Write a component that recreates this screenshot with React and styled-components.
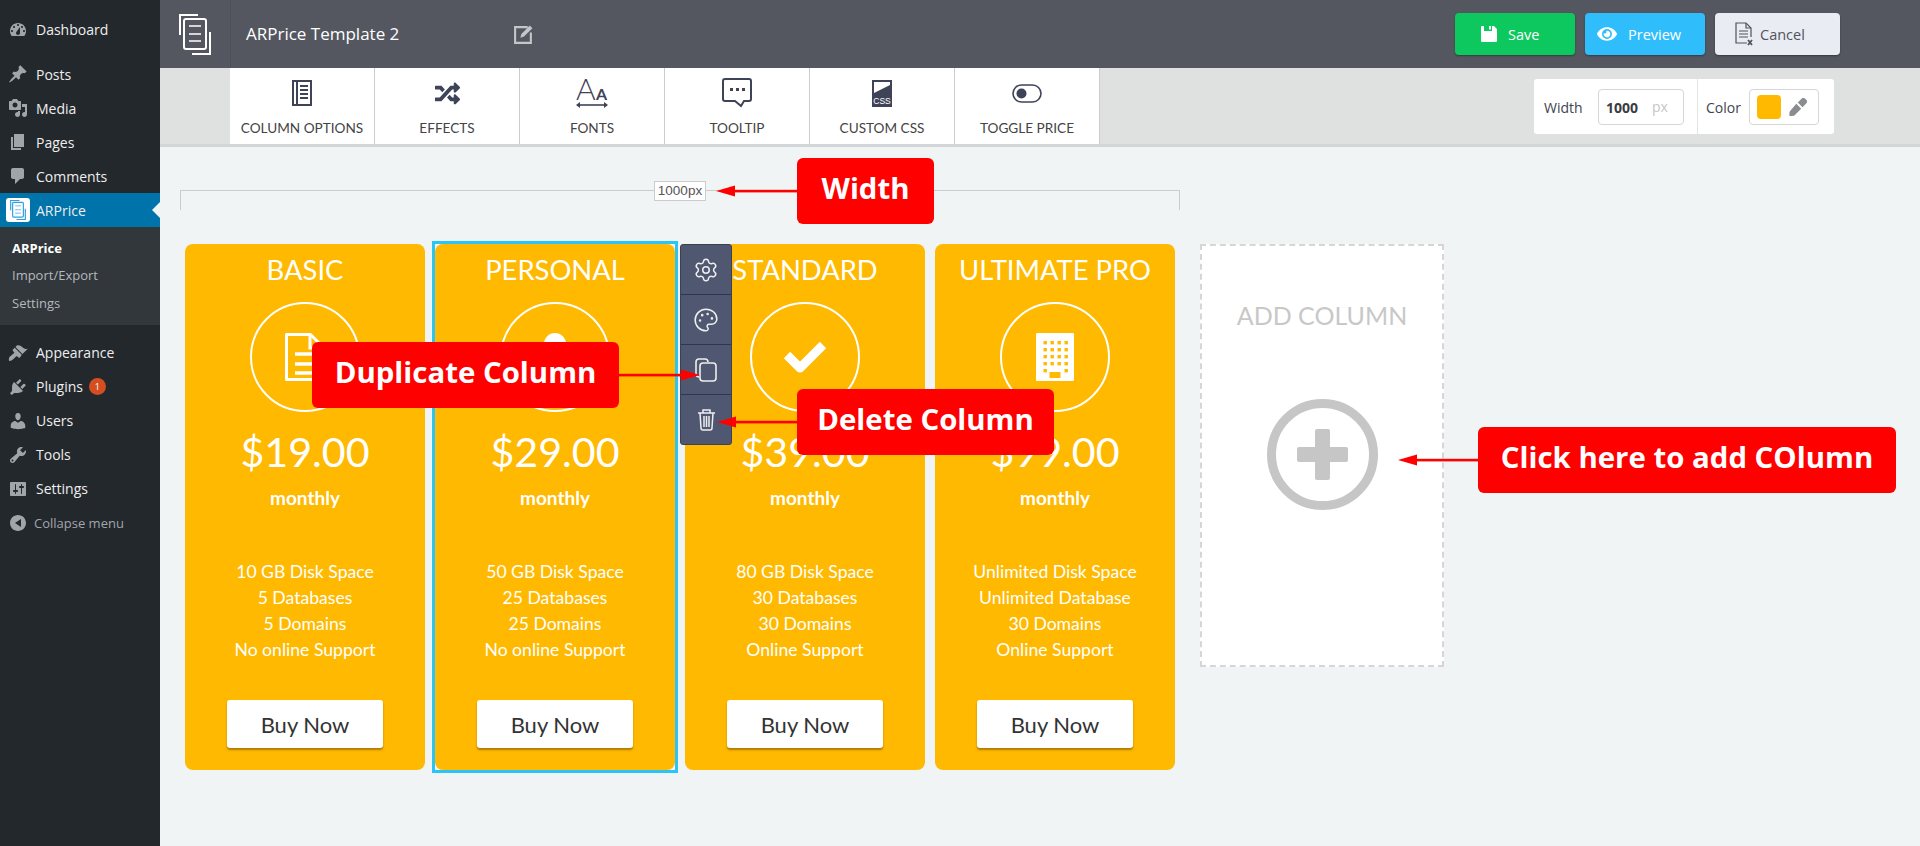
import styled, { createGlobalStyle } from "styled-components";
import { Settings as Gear, Palette } from "lucide-react";
import { FaEye, FaRandom } from "react-icons/fa";

const GlobalStyle = createGlobalStyle`
  html, body {
    margin: 0;
    padding: 0;
    height: 100%;
    overflow: hidden;
    background: #f1f4f5;
    font-family: "Open Sans", sans-serif;
  }
`;

const Page = styled.div`
  display: flex;
  width: 1920px;
  height: 846px;
  overflow: hidden;
`;

/* wp admin menu */
const Sidebar = styled.nav`
  width: 160px;
  flex-shrink: 0;
  padding-top: 13px;
  box-sizing: border-box;
  background: #23282d;
`;

const MenuItem = styled.div`
  position: relative;
  display: flex;
  align-items: center;
  height: 34px;
  margin-top: ${(p) => p.$gap || 0}px;
  padding: 0 0 ${(p) => (p.$lift ? 1 : 0)}px 8px;
  box-sizing: border-box;
  color: ${(p) => (p.$muted ? "#a0a5aa" : "#eeeeee")};
  background: ${(p) => (p.$active ? "#0073aa" : "transparent")};
  font-size: ${(p) => (p.$muted ? 13 : 14)}px;

  svg {
    flex-shrink: 0;
    width: 20px;
    height: 20px;
    margin-right: ${(p) => (p.$muted ? 6 : 8)}px;
    fill: #a0a5aa;
    fill-rule: evenodd;
  }
`;

const MenuLogo = styled.span`
  display: flex;
  align-items: center;
  justify-content: center;
  width: 24px;
  height: 24px;
  margin: 0 6px 0 -2px;
  border-radius: 3px;
  background: #ffffff;

  svg {
    width: 16px;
    height: 20px;
    margin: 0;
    fill: none;
  }
`;

const ActiveNotch = styled.span`
  position: absolute;
  right: 0;
  top: 9px;
  border: 8px solid transparent;
  border-left-width: 0;
  border-right-color: #f1f4f5;
`;

const Badge = styled.span`
  display: flex;
  align-items: center;
  justify-content: center;
  width: 17px;
  height: 17px;
  margin-left: 6px;
  border-radius: 50%;
  background: #d54e21;
  color: #ffffff;
  font-size: 9px;
`;

const SubMenu = styled.div`
  display: flex;
  flex-direction: column;
  height: 98px;
  margin-bottom: 11px;
  padding-top: 6px;
  box-sizing: border-box;
  background: #32373c;
`;

const SubItem = styled.div`
  height: 28px;
  padding-left: 12px;
  line-height: ${(p) => (p.$current ? 30 : 28)}px;
  font-size: 13px;
  font-weight: ${(p) => (p.$current ? 700 : 400)};
  color: ${(p) => (p.$current ? "#ffffff" : "#b4b9be")};
`;

const Main = styled.div`
  display: flex;
  flex: 1;
  flex-direction: column;
  min-width: 0;
`;

/* top bar */
const Header = styled.header`
  display: flex;
  align-items: center;
  height: 68px;
  flex-shrink: 0;
  background: #545760;
`;

const HeaderLogo = styled.div`
  display: flex;
  align-items: center;
  justify-content: center;
  width: 71px;
  height: 100%;
  border-right: 1px solid #4c505b;
  box-sizing: border-box;
`;

const Title = styled.div`
  width: 268px;
  margin: -1px 0 0 15px;
  color: #ffffff;
  font-size: 17px;
`;

const EditIcon = styled.svg`
  width: 21px;
  height: 21px;
  margin-left: -1px;
`;

const HeaderActions = styled.div`
  display: flex;
  gap: 10px;
  margin-left: auto;
  margin-right: 80px;
`;

const ActionButton = styled.div`
  display: flex;
  align-items: center;
  gap: ${(p) => p.$gap}px;
  width: ${(p) => p.$w}px;
  height: 42px;
  padding-left: ${(p) => p.$pad}px;
  box-sizing: border-box;
  border-radius: 4px;
  background: ${(p) => p.$bg};
  color: ${(p) => p.$color};
  font-size: 14.5px;
  box-shadow: 0 1px 2px rgba(0, 0, 0, 0.35);
`;

/* option tabs */
const Toolbar = styled.div`
  display: flex;
  height: 79px;
  flex-shrink: 0;
  padding-left: 70px;
  box-sizing: border-box;
  background: #dfe1e0;
  border-bottom: 3px solid #d2d6d8;
`;

const Tab = styled.div`
  display: flex;
  flex-direction: column;
  align-items: center;
  width: 145px;
  padding-top: 10px;
  box-sizing: border-box;
  border-right: 1px solid #cccccc;
  background: #ffffff;
  color: #444444;
  font-family: Lato, sans-serif;
  font-size: 13.6px;
`;

const TabIcon = styled.div`
  display: flex;
  align-items: center;
  justify-content: center;
  height: 30px;
  margin-bottom: 12px;
  color: #3f4358;
`;

const SizePanel = styled.div`
  display: flex;
  align-items: center;
  width: 300px;
  height: 55px;
  margin: 11px 86px 0 auto;
  border-radius: 3px;
  background: #ffffff;
  font-size: 14px;
  color: #41444f;
`;

const PanelPart = styled.div`
  display: flex;
  align-items: center;
  height: 100%;
  width: ${(p) => p.$w}px;
  padding-left: ${(p) => p.$pad}px;
  box-sizing: border-box;
  border-right: ${(p) => (p.$line ? "1px solid #e2e4e6" : "none")};
`;

const FieldLabel = styled.span`
  width: ${(p) => p.$w}px;
  padding-top: 2px;
`;

const InputBox = styled.div`
  display: flex;
  align-items: center;
  gap: ${(p) => p.$gap}px;
  width: ${(p) => p.$w}px;
  height: 36px;
  padding-left: ${(p) => p.$pad}px;
  box-sizing: border-box;
  border: 1px solid #d4d6d8;
  border-radius: 4px;
`;

const WidthValue = styled.b`
  padding-top: 2px;
  color: #3a3c42;
`;

const Unit = styled.span`
  margin-left: 14px;
  color: #c4c6ca;
`;

const Swatch = styled.span`
  width: 24px;
  height: 24px;
  border-radius: 4px;
  background: #ffb900;
`;

/* editing area */
const Canvas = styled.div`
  position: relative;
  flex: 1;
  padding-top: 43px;
  background: #f1f4f5;
`;

const Ruler = styled.div`
  position: relative;
  width: 1000px;
  height: 20px;
  margin-left: 20px;
  box-sizing: border-box;
  border: 1px solid #cccccc;
  border-bottom: 0;
`;

const RulerLabel = styled.span`
  position: absolute;
  left: 473px;
  top: -10px;
  width: 52px;
  height: 20px;
  box-sizing: border-box;
  border: 1px solid #cccccc;
  background: #ffffff;
  color: #555555;
  font-family: "Liberation Sans", sans-serif;
  font-size: 13.5px;
  line-height: 18px;
  text-align: center;
`;

const Columns = styled.div`
  display: flex;
  align-items: flex-start;
  gap: 10px;
  margin: 34px 0 0 25px;
`;

const Card = styled.div`
  position: relative;
  display: flex;
  flex-direction: column;
  align-items: center;
  width: 240px;
  height: 526px;
  border-radius: 8px;
  background: #ffb900;
  color: #ffffff;
  font-family: Lato, sans-serif;

  ${(p) =>
    p.$selected &&
    `
    &::after {
      content: "";
      position: absolute;
      inset: -3px;
      border: 3px solid #29c5f6;
      pointer-events: none;
    }
  `}
`;

const CardTitle = styled.div`
  height: 52px;
  line-height: 52px;
  font-size: 27.4px;
`;

const IconRing = styled.div`
  display: flex;
  align-items: center;
  justify-content: center;
  width: 110px;
  height: 110px;
  margin-top: 6px;
  box-sizing: border-box;
  border: 2px solid #ffffff;
  border-radius: 50%;
`;

const Price = styled.div`
  height: 50px;
  margin-top: 14px;
  line-height: 50px;
  font-size: 41.2px;
`;

const Period = styled.div`
  height: 24px;
  margin-top: 10px;
  line-height: 24px;
  font-size: 19px;
  font-weight: 700;
`;

const Features = styled.div`
  margin-top: 49px;
  text-align: center;
  font-size: 17.6px;
  line-height: 26px;
`;

const BuyButton = styled.div`
  width: 156px;
  height: 48px;
  margin-top: 37px;
  padding-top: 1px;
  box-sizing: border-box;
  border-radius: 3px;
  background: #ffffff;
  box-shadow: 0 2px 2px rgba(120, 80, 0, 0.6);
  color: #333333;
  font-size: 22px;
  line-height: 47px;
  text-align: center;
`;

const SideTools = styled.div`
  position: absolute;
  left: calc(100% + 5px);
  top: 0;
  z-index: 2;
  width: 52px;
  box-sizing: border-box;
  border: 1px solid #3a4157;
  border-radius: 3px;
  background: #4f5870;
`;

const SideTool = styled.div`
  display: flex;
  align-items: center;
  justify-content: center;
  height: 50px;
  box-sizing: border-box;
  color: #eeeeee;

  &:first-child {
    height: 49px;
  }

  & + & {
    border-top: 1px solid #2f3650;
  }
`;

const AddColumn = styled.div`
  display: flex;
  flex-direction: column;
  align-items: center;
  width: 244px;
  height: 423px;
  margin-left: 15px;
  box-sizing: border-box;
  border: 2px dashed #d6d6d6;
  background: #ffffff;
`;

const AddTitle = styled.div`
  margin-top: 53px;
  color: #c8c8c8;
  font-family: Lato, sans-serif;
  font-size: 25px;
  line-height: 32px;
`;

const AddRing = styled.div`
  position: relative;
  width: 111px;
  height: 111px;
  margin-top: 68px;
  box-sizing: border-box;
  border: 9px solid #c6c6c6;
  border-radius: 50%;

  &::before,
  &::after {
    content: "";
    position: absolute;
    background: #c6c6c6;
    border-radius: 2px;
  }

  &::before {
    left: 21px;
    top: 39px;
    width: 51px;
    height: 15px;
  }

  &::after {
    left: 39px;
    top: 21px;
    width: 15px;
    height: 51px;
  }
`;

/* red notes drawn over the screen */
const Callout = styled.div`
  position: absolute;
  left: ${(p) => p.$x - 160}px;
  top: ${(p) => p.$y - 147}px;
  z-index: 3;
  display: flex;
  align-items: center;
  justify-content: center;
  width: ${(p) => p.$w}px;
  height: 66px;
  padding-bottom: 6px;
  box-sizing: border-box;
  border-radius: 6px;
  background: #ff0000;
  color: #ffffff;
  font-size: 29.4px;
  font-weight: 700;
  white-space: nowrap;
`;

const ArrowSvg = styled.svg`
  position: absolute;
  left: ${(p) => p.$x - 160}px;
  top: ${(p) => p.$y - 147 - 6}px;
  z-index: 4;
  width: 81px;
  height: 12px;
  transform: ${(p) => (p.$flip ? "scaleX(-1)" : "none")};
`;

const Arrow = ({ x, y, flip }) => (
  <ArrowSvg $x={x} $y={y} $flip={flip} viewBox="0 0 81 12">
    <path d="M0 6L19 .5v11z" fill="#ff0000" />
    <rect x="18" y="4.8" width="63" height="2.6" fill="#ff0000" />
  </ArrowSvg>
);

const Dash = ({ d }) => (
  <svg viewBox="0 0 20 20">
    <path d={d} />
  </svg>
);

const icons = {
  dashboard:
    "M3.76 16h12.48c1.1-1.37 1.76-3.11 1.76-5 0-4.42-3.58-8-8-8s-8 3.58-8 8c0 1.89.66 3.63 1.76 5zM10 4c.55 0 1 .45 1 1s-.45 1-1 1-1-.45-1-1 .45-1 1-1zM6 6c.55 0 1 .45 1 1s-.45 1-1 1-1-.45-1-1 .45-1 1-1zm8 0c.55 0 1 .45 1 1s-.45 1-1 1-1-.45-1-1 .45-1 1-1zm-5.37 5.55L12 7v6c0 1.1-.9 2-2 2s-2-.9-2-2c0-.57.24-1.08.63-1.45zM4 10c.55 0 1 .45 1 1s-.45 1-1 1-1-.45-1-1 .45-1 1-1zm12 0c.55 0 1 .45 1 1s-.45 1-1 1-1-.45-1-1 .45-1 1-1z",
  posts:
    "M10.44 3.02l1.82-1.82 6.36 6.35-1.83 1.82c-1.05-.68-2.48-.57-3.41.36l-.75.75c-.92.93-1.04 2.35-.35 3.41l-1.83 1.82-2.41-2.41-2.8 2.79c-.42.42-3.38 2.71-3.8 2.29s1.86-3.39 2.28-3.81l2.79-2.79L4.1 9.36l1.83-1.82c1.05.69 2.48.57 3.4-.36l.75-.75c.93-.92 1.05-2.35.36-3.41z",
  media:
    "M13 11V4c0-.55-.45-1-1-1h-1.67L9 1H5L3.67 3H2c-.55 0-1 .45-1 1v7c0 .55.45 1 1 1h10c.55 0 1-.45 1-1zM7 4.5c1.38 0 2.5 1.12 2.5 2.5S8.38 9.5 7 9.5 4.5 8.38 4.5 7 5.62 4.5 7 4.5zM14 6h5v10.5c0 1.38-1.12 2.5-2.5 2.5S14 17.88 14 16.5s1.12-2.5 2.5-2.5c.17 0 .34.02.5.05V9h-3V6zm-4 8.05V13h2v3.5c0 1.38-1.12 2.5-2.5 2.5S7 17.88 7 16.5 8.12 14 9.5 14c.17 0 .34.02.5.05z",
  pages: "M6 15V2h10v13H6zm-1 1h8v2H3V5h2v11z",
  comments:
    "M5 2h9c1.1 0 2 .9 2 2v7c0 1.1-.9 2-2 2h-2l-5 5v-5H5c-1.1 0-2-.9-2-2V4c0-1.1.9-2 2-2z",
  appearance:
    "M14.48 11.06L7.41 3.99l1.5-1.5c.5-.56 2.3-.47 3.51.32 1.21.8 1.43 1.28 2.91 2.1 1.18.64 2.45 1.26 4.45.85zm-.71.71L6.7 4.7 4.93 6.47c-.39.39-.39 1.02 0 1.41l1.06 1.06c.39.39.39 1.03 0 1.42-.6.6-1.43 1.11-2.21 1.69-.35.26-.7.53-1.01.84C1.43 13.23.4 15.49 1.1 17.9c1 .2 3-.4 4.4-1.9 .5-.5 2-2 2.55-2.55.39-.39 1.02-.39 1.41 0l1.06 1.06c.39.39 1.03.39 1.42 0z",
  plugins:
    "M13.11 4.36L9.87 7.6 8 5.73l3.24-3.24c.35-.34 1.05-.2 1.56.32.52.51.66 1.21.31 1.55zm-8 1.77l.91-1.12 9.01 9.01-1.19.84c-.71.71-2.63 1.16-3.82 1.16H6.14L4.9 17.26c-.59.59-1.54.59-2.12 0-.59-.58-.59-1.53 0-2.12l1.24-1.24v-3.88c0-1.13.4-3.19 1.09-3.89zm7.26 3.97l3.24-3.24c.34-.35 1.04-.21 1.55.31.52.51.66 1.21.31 1.55l-3.24 3.25z",
  users:
    "M10 9.25c-2.27 0-2.73-3.44-2.73-3.44C7 4.02 7.82 2 9.97 2c2.16 0 2.98 2.02 2.71 3.81 0 0-.41 3.44-2.68 3.44zm0 2.57L12.72 10c2.39 0 4.52 2.33 4.52 4.53v2.49s-3.65 1.13-7.24 1.13c-3.65 0-7.24-1.13-7.24-1.13v-2.49c0-2.25 1.94-4.48 4.47-4.48z",
  tools:
    "M16.68 9.77c-1.34 1.34-3.3 1.67-4.95.99l-5.41 6.52c-.99.99-2.59.99-3.58 0s-.99-2.59 0-3.57l6.52-5.42c-.68-1.65-.35-3.61.99-4.95 1.28-1.28 3.12-1.62 4.72-1.06l-2.89 2.89 2.82 2.82 2.86-2.87c.53 1.58.18 3.39-1.08 4.65zM3.81 16.21c.4.39 1.04.39 1.43 0 .4-.4.4-1.04 0-1.43-.39-.4-1.03-.4-1.43 0-.39.39-.39 1.03 0 1.43z",
  settings:
    "M18 16V4c0-.55-.45-1-1-1H3c-.55 0-1 .45-1 1v12c0 .55.45 1 1 1h14c.55 0 1-.45 1-1zM8 11h1c.55 0 1 .45 1 1s-.45 1-1 1H8v1.5c0 .28-.22.5-.5.5s-.5-.22-.5-.5V13H6c-.55 0-1-.45-1-1s.45-1 1-1h1V5.5c0-.28.22-.5.5-.5s.5.22.5.5V11zm5-2h-1c-.55 0-1-.45-1-1s.45-1 1-1h1V5.5c0-.28.22-.5.5-.5s.5.22.5.5V7h1c.55 0 1 .45 1 1s-.45 1-1 1h-1v5.5c0 .28-.22.5-.5.5s-.5-.22-.5-.5V9z",
  collapse: "M18 10c0-4.42-3.58-8-8-8s-8 3.58-8 8 3.58 8 8 8 8-3.58 8-8zm-5-4v8l-6-4z",
};

const DocStack = ({ color, w, h, sw }) => (
  <svg width={w} height={h} viewBox="0 0 32 41" fill="none" stroke={color} strokeWidth={sw}>
    <path d="M19 1H1v20" />
    <path d="M31 18v22H13" />
    <rect x="5" y="5" width="22" height="30" rx="2" />
    <path d="M10 12h12M10 20h12M10 27h12" strokeWidth="1.4" />
  </svg>
);

const ColumnIcon = () => (
  <svg width="20" height="26" viewBox="0 0 20 26" fill="none" stroke="currentColor">
    <rect x="1" y="1" width="18" height="24" strokeWidth="2" />
    <path d="M5 2v22" strokeWidth="2" />
    <path d="M8 6h8M8 10h8M8 14h8M8 18h8" strokeWidth="2" />
  </svg>
);

const FontsIcon = () => (
  <svg width="32" height="30" viewBox="0 0 32 30" fill="currentColor">
    <text x="0" y="22" fontFamily="Lato, sans-serif" fontSize="30" fontWeight="300">
      A
    </text>
    <text x="20" y="22" fontFamily="Lato, sans-serif" fontSize="16" fontWeight="700">
      A
    </text>
    <path d="M3 27h26" stroke="currentColor" strokeWidth="1.6" />
    <path d="M0 27l4-3v6zM32 27l-4-3v6z" />
  </svg>
);

const TooltipIcon = () => (
  <svg width="30" height="30" viewBox="0 0 30 30" fill="none" stroke="currentColor" strokeWidth="2">
    <path d="M3 1h24a2 2 0 0 1 2 2v18a2 2 0 0 1-2 2h-5l-3 5-6-5H3a2 2 0 0 1-2-2V3a2 2 0 0 1 2-2z" />
    <path d="M8 10h3v3H8zM14 10h3v3h-3zM20 10h3v3h-3z" fill="currentColor" stroke="none" />
  </svg>
);

const CssIcon = () => (
  <svg width="20" height="27" viewBox="0 0 20 27">
    <path d="M0 0h20v27H0z" fill="currentColor" />
    <path d="M2 2h16v3L2 13z" fill="#ffffff" />
    <text x="10" y="23.5" fill="#ffffff" fontFamily="'Liberation Sans', sans-serif" fontSize="8.5" textAnchor="middle">
      CSS
    </text>
  </svg>
);

const ToggleIcon = () => (
  <svg width="30" height="19" viewBox="0 0 30 19" fill="none" stroke="currentColor" strokeWidth="1.6">
    <rect x="1" y="1" width="28" height="17" rx="8.5" />
    <circle cx="9.5" cy="9.5" r="5" fill="currentColor" stroke="none" />
  </svg>
);

const FloppyIcon = () => (
  <svg width="16" height="16" viewBox="0 0 16 16" fill="#ffffff">
    <path d="M0 1a1 1 0 0 1 1-1h2v5h8V0h2l3 3v12a1 1 0 0 1-1 1H1a1 1 0 0 1-1-1z" />
    <path d="M8 0h2v3.5H8z" />
  </svg>
);

const CancelIcon = () => (
  <svg width="18" height="24" viewBox="0 0 18 24" fill="none" stroke="#50535c" strokeWidth="1.2">
    <path d="M12 21H1V1h10l5 5v9" />
    <path d="M11 1v5h5" />
    <path d="M4 9h9M4 12h9M4 15h9" />
    <path d="M13 18l4 5M17 18l-4 5" strokeWidth="1.8" />
  </svg>
);

const DropperIcon = () => (
  <svg width="18" height="18" viewBox="0 0 18 18" fill="#8a8c90">
    <path d="M12.5.8a2.6 2.6 0 0 1 3.7 0l1 1a2.6 2.6 0 0 1 0 3.7l-2.7 2.7-1 1-4.7-4.7 1-1z" />
    <path d="M7.3 5.8l4.9 4.9-6.6 6.6c-.8.7-2.2.7-3.4.7H.4v-1.8c0-1.2.1-2.6.9-3.4z" />
  </svg>
);

const DocIcon = () => (
  <svg width="40" height="48" viewBox="0 0 40 48" fill="none" stroke="#ffffff" strokeWidth="3">
    <path d="M1.5 1.5h24l13 13v32h-37z" strokeLinejoin="round" />
    <path d="M25 2v13h13" />
    <path d="M10 21h20M10 31h20M10 40h20" strokeWidth="3.5" />
  </svg>
);

const UserIcon = () => (
  <svg width="44" height="48" viewBox="0 0 44 48" fill="#ffffff">
    <circle cx="22" cy="11" r="11" />
    <path d="M2 48c0-14 8-22 20-22s20 8 20 22z" />
  </svg>
);

const CheckIcon = () => (
  <svg width="44" height="34" viewBox="0 0 44 34" fill="none" stroke="#ffffff" strokeWidth="9" strokeLinejoin="round">
    <path d="M4 15l13 13L40 5" />
  </svg>
);

const windowCols = [7.5, 14.5, 21.5, 28.5];
const windowRows = [8, 15, 22, 29];

const BuildingIcon = () => (
  <svg width="38" height="48" viewBox="0 0 38 48">
    <rect width="38" height="48" rx="1" fill="#ffffff" />
    {windowRows.map((y) =>
      windowCols.map((x) => <rect key={`${x}-${y}`} x={x} y={y} width="3.4" height="3.4" fill="#ffb900" />)
    )}
    <rect x="7.5" y="36" width="3.4" height="3.4" fill="#ffb900" />
    <rect x="28.5" y="36" width="3.4" height="3.4" fill="#ffb900" />
    <rect x="13.5" y="39" width="11" height="6" fill="#ffb900" />
  </svg>
);

const CopyIcon = () => (
  <svg width="22" height="24" viewBox="0 0 22 24" fill="none" stroke="#eeeeee" strokeWidth="1.6">
    <path d="M4 19a3 3 0 0 1-3-3V4a3 3 0 0 1 3-3h6a3 3 0 0 1 3 3" />
    <rect x="5" y="5" width="16" height="18" rx="3" />
  </svg>
);

const TrashIcon = () => (
  <svg width="19" height="22" viewBox="0 0 19 22" fill="none" stroke="#eeeeee" strokeWidth="1.5">
    <path d="M1 4h17M6 4V1h7v3" />
    <path d="M3 4l1 15a2 2 0 0 0 2 2h7a2 2 0 0 0 2-2l1-15" />
    <path d="M7 7v11M9.5 7v11M12 7v11" />
  </svg>
);

const plans = [
  {
    name: "BASIC",
    price: "$19.00",
    icon: <DocIcon />,
    features: ["10 GB Disk Space", "5 Databases", "5 Domains", "No online Support"],
  },
  {
    name: "PERSONAL",
    price: "$29.00",
    icon: <UserIcon />,
    selected: true,
    features: ["50 GB Disk Space", "25 Databases", "25 Domains", "No online Support"],
  },
  {
    name: "STANDARD",
    price: "$39.00",
    icon: <CheckIcon />,
    features: ["80 GB Disk Space", "30 Databases", "30 Domains", "Online Support"],
  },
  {
    name: "ULTIMATE PRO",
    price: "$99.00",
    icon: <BuildingIcon />,
    features: ["Unlimited Disk Space", "Unlimited Database", "30 Domains", "Online Support"],
  },
];

const tabs = [
  { label: "COLUMN OPTIONS", icon: <ColumnIcon /> },
  { label: "EFFECTS", icon: <FaRandom size={25} /> },
  { label: "FONTS", icon: <FontsIcon /> },
  { label: "TOOLTIP", icon: <TooltipIcon /> },
  { label: "CUSTOM CSS", icon: <CssIcon /> },
  { label: "TOGGLE PRICE", icon: <ToggleIcon /> },
];

const App = () => {
  return (
    <Page>
      <GlobalStyle />
      <Sidebar>
        <MenuItem $lift>
          <Dash d={icons.dashboard} />
          Dashboard
        </MenuItem>
        <MenuItem $gap={10}>
          <Dash d={icons.posts} />
          Posts
        </MenuItem>
        <MenuItem>
          <Dash d={icons.media} />
          Media
        </MenuItem>
        <MenuItem>
          <Dash d={icons.pages} />
          Pages
        </MenuItem>
        <MenuItem>
          <Dash d={icons.comments} />
          Comments
        </MenuItem>
        <MenuItem $active>
          <MenuLogo>
            <DocStack color="#2f9fe0" w={16} h={20} sw={2.4} />
          </MenuLogo>
          ARPrice
          <ActiveNotch />
        </MenuItem>
        <SubMenu>
          <SubItem $current>ARPrice</SubItem>
          <SubItem>Import/Export</SubItem>
          <SubItem>Settings</SubItem>
        </SubMenu>
        <MenuItem $lift>
          <Dash d={icons.appearance} />
          Appearance
        </MenuItem>
        <MenuItem $lift>
          <Dash d={icons.plugins} />
          Plugins
          <Badge>1</Badge>
        </MenuItem>
        <MenuItem $lift>
          <Dash d={icons.users} />
          Users
        </MenuItem>
        <MenuItem $lift>
          <Dash d={icons.tools} />
          Tools
        </MenuItem>
        <MenuItem $lift>
          <Dash d={icons.settings} />
          Settings
        </MenuItem>
        <MenuItem $muted $lift>
          <Dash d={icons.collapse} />
          Collapse menu
        </MenuItem>
      </Sidebar>

      <Main>
        <Header>
          <HeaderLogo>
            <DocStack color="#ffffff" w={32} h={41} sw={2} />
          </HeaderLogo>
          <Title>ARPrice Template 2</Title>
          <EditIcon viewBox="0 0 20 20" fill="none" stroke="#c4c6c9" strokeWidth="2">
            <path d="M14 3H2v15h15V8" />
            <path d="M7 13l1-3.5L16 1.5l2.5 2.5-8 8z" fill="#c4c6c9" stroke="none" />
          </EditIcon>
          <HeaderActions>
            <ActionButton $w={120} $pad={26} $gap={11} $bg="#0dc85f" $color="#ffffff">
              <FloppyIcon />
              Save
            </ActionButton>
            <ActionButton $w={120} $pad={12} $gap={11} $bg="#30bdfc" $color="#ffffff">
              <FaEye size={20} />
              Preview
            </ActionButton>
            <ActionButton $w={125} $pad={20} $gap={7} $bg="#e9ecf2" $color="#50535c">
              <CancelIcon />
              Cancel
            </ActionButton>
          </HeaderActions>
        </Header>

        <Toolbar>
          {tabs.map((tab) => (
            <Tab key={tab.label}>
              <TabIcon>{tab.icon}</TabIcon>
              {tab.label}
            </Tab>
          ))}
          <SizePanel>
            <PanelPart $w={164} $pad={10} $line>
              <FieldLabel $w={54}>Width</FieldLabel>
              <InputBox $w={86} $pad={7} $gap={0}>
                <WidthValue>1000</WidthValue>
                <Unit>px</Unit>
              </InputBox>
            </PanelPart>
            <PanelPart $w={136} $pad={8}>
              <FieldLabel $w={43}>Color</FieldLabel>
              <InputBox $w={70} $pad={7} $gap={8}>
                <Swatch />
                <DropperIcon />
              </InputBox>
            </PanelPart>
          </SizePanel>
        </Toolbar>

        <Canvas>
          <Ruler>
            <RulerLabel>1000px</RulerLabel>
          </Ruler>
          <Columns>
            {plans.map((plan) => (
              <Card key={plan.name} $selected={plan.selected}>
                <CardTitle>{plan.name}</CardTitle>
                <IconRing>{plan.icon}</IconRing>
                <Price>{plan.price}</Price>
                <Period>monthly</Period>
                <Features>
                  {plan.features.map((line) => (
                    <div key={line}>{line}</div>
                  ))}
                </Features>
                <BuyButton>Buy Now</BuyButton>
                {plan.selected && (
                  <SideTools>
                    <SideTool>
                      <Gear size={26} strokeWidth={1.4} />
                    </SideTool>
                    <SideTool>
                      <Palette size={26} strokeWidth={1.4} />
                    </SideTool>
                    <SideTool>
                      <CopyIcon />
                    </SideTool>
                    <SideTool>
                      <TrashIcon />
                    </SideTool>
                  </SideTools>
                )}
              </Card>
            ))}
            <AddColumn>
              <AddTitle>ADD COLUMN</AddTitle>
              <AddRing />
            </AddColumn>
          </Columns>

          <Callout $x={797} $y={158} $w={137}>
            Width
          </Callout>
          <Callout $x={312} $y={342} $w={307}>
            Duplicate Column
          </Callout>
          <Callout $x={797} $y={389} $w={257}>
            Delete Column
          </Callout>
          <Callout $x={1478} $y={427} $w={418}>
            Click here to add COlumn
          </Callout>
          <Arrow x={716} y={191} />
          <Arrow x={619} y={375} flip />
          <Arrow x={717} y={422} />
          <Arrow x={1398} y={460} />
        </Canvas>
      </Main>
    </Page>
  );
};

export default App;
